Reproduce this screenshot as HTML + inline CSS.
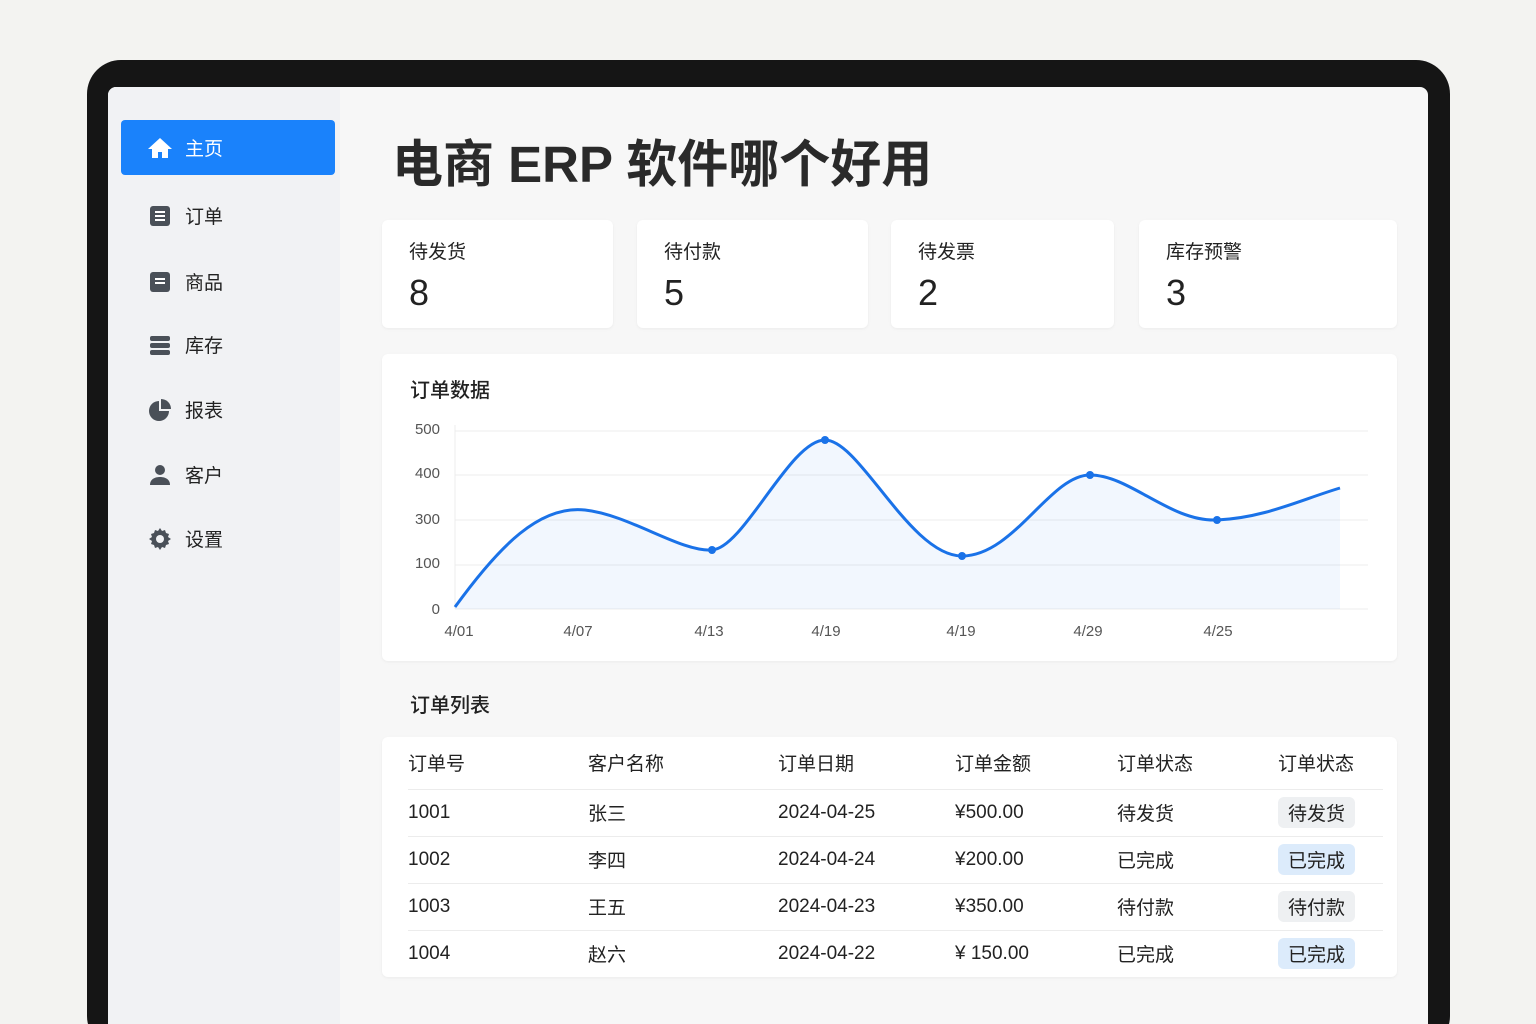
<!DOCTYPE html>
<html><head><meta charset="utf-8"><style>
*{box-sizing:border-box;margin:0;padding:0}
html,body{width:1536px;height:1024px;overflow:hidden}
body{background:#f3f3f1;font-family:"Liberation Sans","Noto Sans CJK SC",sans-serif;color:#222;position:relative}
.frame{position:absolute;left:87px;top:60px;width:1363px;height:990px;background:#151515;border-radius:34px}
.screen{position:absolute;left:108px;top:87px;width:1320px;height:937px;background:#f7f7f7;border-radius:8px 8px 0 0;overflow:hidden}
.side{position:absolute;left:0;top:0;width:232px;height:100%;background:#f1f2f4}
.nav{position:absolute;left:13px;width:214px;height:55px;display:flex;align-items:center;padding-left:26px;font-size:19px;color:#222}
.nav svg{margin-right:12px}
.nav.act{background:#1a82fb;color:#fff;border-radius:4px}
.abs{position:absolute}
.card{position:absolute;background:#fff;border-radius:6px;box-shadow:0 1px 3px rgba(0,0,0,.05)}
.card .l{position:absolute;left:27px;top:17px;font-size:19px}
.card .v{position:absolute;left:27px;top:52px;font-size:36px;font-weight:500}
table{border-collapse:collapse;width:975px;font-size:19px}
td{height:47px;border-top:1px solid #ececec}
tr:first-child td{height:52px}
.b{display:inline-block;padding:2px 10px;border-radius:6px;background:#eef0f2}
.b.bl{background:#dcebfb}
</style></head><body>
<div class="frame"></div>
<div class="screen">
 <div class="side">
  <div class="nav act" style="top:33px"><svg width="26" height="22" viewBox="0 0 26 22"><path d="M13 1 1 12h4v9h6v-6h4v6h6v-9h4z" fill="#fff"/></svg>主页</div>
  <div class="nav" style="top:101px"><svg width="26" height="22" viewBox="0 0 26 22"><rect x="3" y="1" width="20" height="20" rx="3" fill="#4a5058"/><path d="M8 7h10M8 11h10M8 15h10" stroke="#fff" stroke-width="2"/></svg>订单</div>
  <div class="nav" style="top:167px"><svg width="26" height="22" viewBox="0 0 26 22"><rect x="3" y="1" width="20" height="20" rx="3" fill="#4a5058"/><path d="M8 8h10M8 12h10" stroke="#fff" stroke-width="2"/></svg>商品</div>
  <div class="nav" style="top:230px"><svg width="26" height="22" viewBox="0 0 26 22"><rect x="3" y="2" width="20" height="5" rx="2" fill="#4a5058"/><rect x="3" y="9" width="20" height="5" rx="2" fill="#4a5058"/><rect x="3" y="16" width="20" height="5" rx="2" fill="#4a5058"/></svg>库存</div>
  <div class="nav" style="top:295px"><svg width="26" height="22" viewBox="0 0 26 22"><path d="M12 2a10 10 0 1 0 10 10H12z" fill="#4a5058"/><path d="M14 0v10h10A10 10 0 0 0 14 0z" fill="#4a5058"/></svg>报表</div>
  <div class="nav" style="top:360px"><svg width="26" height="22" viewBox="0 0 26 22"><circle cx="13" cy="6" r="5" fill="#4a5058"/><path d="M3 21c0-6 5-8 10-8s10 2 10 8z" fill="#4a5058"/></svg>客户</div>
  <div class="nav" style="top:424px"><svg width="26" height="24" viewBox="0 0 24 24"><path d="M12 1l2 3 3-1 1 3 3 1-1 3 3 2-3 2 1 3-3 1-1 3-3-1-2 3-2-3-3 1-1-3-3-1 1-3-3-2 3-2-1-3 3-1 1-3 3 1z" fill="#4a5058"/><circle cx="12" cy="12" r="4" fill="#f1f2f4"/></svg>设置</div>
 </div>
 <div class="abs" style="left:284px;top:36px;font-size:51px;font-weight:700;color:#2a2a2a">电商 ERP 软件哪个好用</div>
 <div class="card" style="left:274px;top:133px;width:231px;height:108px"><div class="l">待发货</div><div class="v">8</div></div>
 <div class="card" style="left:529px;top:133px;width:231px;height:108px"><div class="l">待付款</div><div class="v">5</div></div>
 <div class="card" style="left:783px;top:133px;width:223px;height:108px"><div class="l">待发票</div><div class="v">2</div></div>
 <div class="card" style="left:1031px;top:133px;width:258px;height:108px"><div class="l">库存预警</div><div class="v">3</div></div>
 <div class="card" style="left:274px;top:267px;width:1015px;height:307px"></div>
 <div class="abs" style="left:302px;top:287px;font-size:20px;font-weight:500">订单数据</div>
 <svg class="abs" style="left:-108px;top:-87px" width="1536" height="1024">
  <g stroke="#ececec"><line x1="455" y1="431" x2="1368" y2="431"/><line x1="455" y1="475" x2="1368" y2="475"/><line x1="455" y1="520" x2="1368" y2="520"/><line x1="455" y1="565" x2="1368" y2="565"/><line x1="455" y1="609" x2="1368" y2="609"/><line x1="455" y1="425" x2="455" y2="609"/></g>
  <g font-size="15" fill="#555" font-family="Liberation Sans,sans-serif" text-anchor="end"><text x="440" y="434">500</text><text x="440" y="478">400</text><text x="440" y="524">300</text><text x="440" y="568">100</text><text x="440" y="614">0</text></g>
  <g font-size="15" fill="#555" font-family="Liberation Sans,sans-serif" text-anchor="middle"><text x="459" y="636">4/01</text><text x="578" y="636">4/07</text><text x="709" y="636">4/13</text><text x="826" y="636">4/19</text><text x="961" y="636">4/19</text><text x="1088" y="636">4/29</text><text x="1218" y="636">4/25</text></g>
  <path d="M455 607C500 545 540 505 585 510S680 552 712 550 790 440 825 440 910 556 962 556 1050 475 1090 475 1170 522 1217 520 1300 500 1340 488V609H455Z" fill="#1a7af0" fill-opacity=".06"/>
  <path d="M455 607C500 545 540 505 585 510S680 552 712 550 790 440 825 440 910 556 962 556 1050 475 1090 475 1170 522 1217 520 1300 500 1340 488" fill="none" stroke="#1a72e8" stroke-width="3"/>
  <g fill="#1a72e8"><circle cx="712" cy="550" r="4"/><circle cx="825" cy="440" r="4"/><circle cx="962" cy="556" r="4"/><circle cx="1090" cy="475" r="4"/><circle cx="1217" cy="520" r="4"/></g>
 </svg>
 <div class="abs" style="left:302px;top:602px;font-size:20px;font-weight:500">订单列表</div>
 <div class="card" style="left:274px;top:650px;width:1015px;height:240px;padding-left:26px;overflow:hidden">
  <table>
   <tr><td style="width:180px;border:0">订单号</td><td style="width:190px;border:0">客户名称</td><td style="width:177px;border:0">订单日期</td><td style="width:162px;border:0">订单金额</td><td style="width:161px;border:0">订单状态</td><td style="border:0">订单状态</td></tr>
   <tr><td>1001</td><td>张三</td><td>2024-04-25</td><td>¥500.00</td><td>待发货</td><td><span class="b">待发货</span></td></tr>
   <tr><td>1002</td><td>李四</td><td>2024-04-24</td><td>¥200.00</td><td>已完成</td><td><span class="b bl">已完成</span></td></tr>
   <tr><td>1003</td><td>王五</td><td>2024-04-23</td><td>¥350.00</td><td>待付款</td><td><span class="b">待付款</span></td></tr>
   <tr><td>1004</td><td>赵六</td><td>2024-04-22</td><td>¥ 150.00</td><td>已完成</td><td><span class="b bl">已完成</span></td></tr>
  </table>
 </div>
</div>
</body></html>
